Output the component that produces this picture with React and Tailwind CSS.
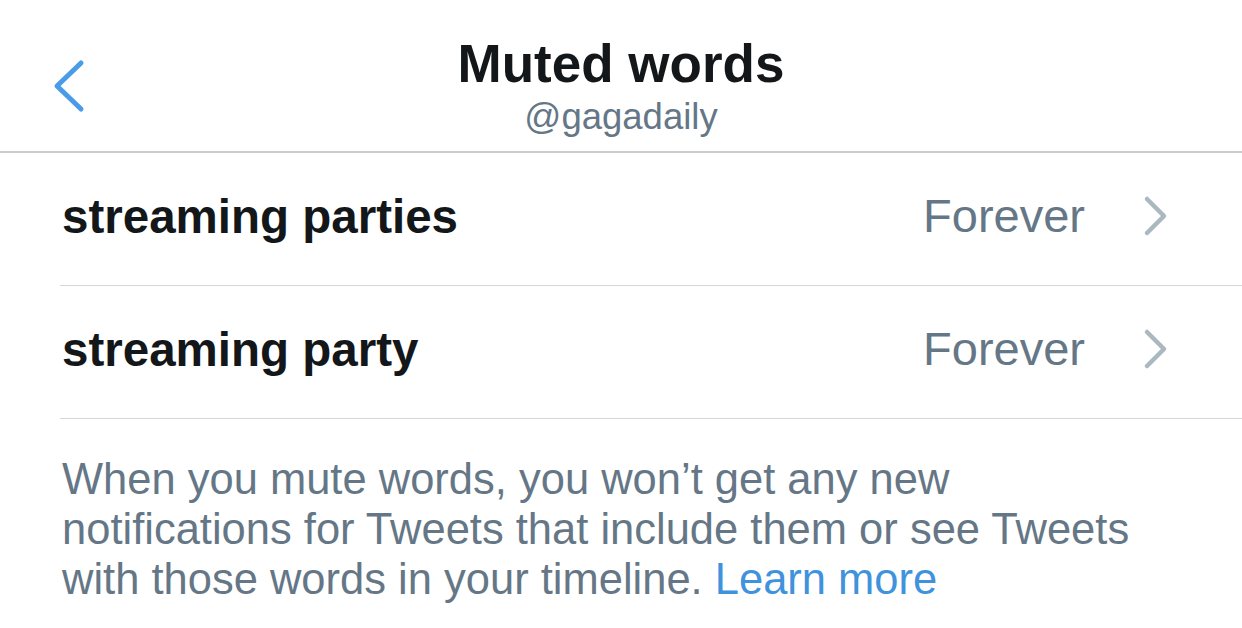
import React from 'react';

const words = [
  { word: 'streaming parties', duration: 'Forever' },
  { word: 'streaming party', duration: 'Forever' },
];

const BackIcon = () => (
  <svg width="34" height="54" viewBox="0 0 34 54" fill="none">
    <path d="M28 4 L4 27 L28 50" stroke="#4a9be8" strokeWidth="5" strokeLinecap="round" strokeLinejoin="round" />
  </svg>
);

const ChevronRight = () => (
  <svg width="26" height="44" viewBox="0 0 26 44" fill="none">
    <path d="M4 5 L21 22 L4 39" stroke="#aab8c2" strokeWidth="4.5" strokeLinecap="round" strokeLinejoin="round" />
  </svg>
);

export default function App() {
  return (
    <div className="w-[1242px] h-[628px] bg-white overflow-hidden font-['Liberation_Sans',Arial,sans-serif]">
      <header className="h-[153px] border-b-2 border-[#cccccc] grid grid-cols-[1fr_auto_1fr]">
        <div className="pt-[59px] pl-[53px]">
          <BackIcon />
        </div>
        <div className="flex flex-col items-center pt-[37px]">
          <h1 className="text-[53px] leading-[53px] font-bold text-[#14171a]">Muted words</h1>
          <p className="mt-[9px] text-[36.5px] leading-[36px] text-[#657786]">@gagadaily</p>
        </div>
        <div />
      </header>

      <div className="ml-[60px]">
        {words.map(w => (
          <div key={w.word} className="h-[133px] border-b border-[#d3d6da] flex items-center pl-[2px] pr-[73px] pb-[6px]">
            <span className="flex-1 text-[47.5px] leading-[47px] font-bold text-[#14171a]">{w.word}</span>
            <span className="text-[47px] leading-[46px] text-[#657786]">{w.duration}</span>
            <span className="ml-[58px] flex">
              <ChevronRight />
            </span>
          </div>
        ))}
      </div>

      <p className="pt-[35px] pl-[62px] text-[43.5px] leading-[50px] text-[#657786]">
        When you mute words, you won’t get any new<br />
        notifications for Tweets that include them or see Tweets<br />
        with those words in your timeline. <span className="text-[#3f92dc]">Learn more</span>
      </p>
    </div>
  );
}
